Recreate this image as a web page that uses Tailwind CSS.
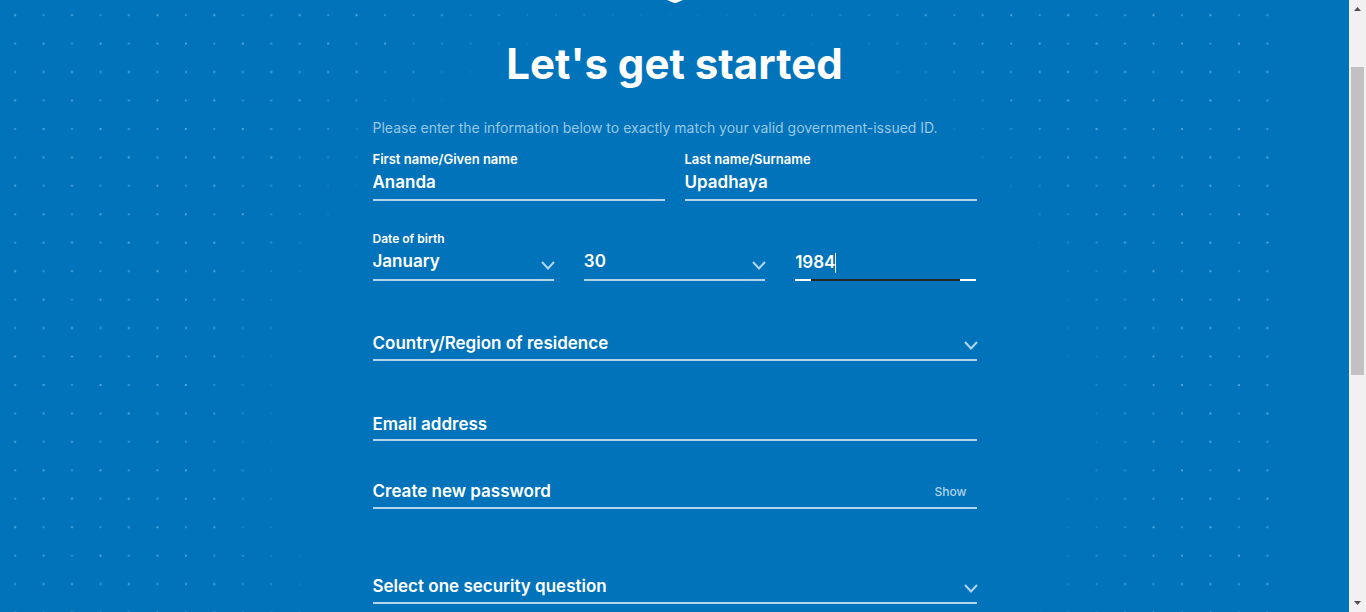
<!DOCTYPE html>
<html lang="en">
<head>
<meta charset="utf-8">
<meta name="viewport" content="width=device-width, initial-scale=1">
<title>Let's get started</title>
<script src="https://cdn.jsdelivr.net/npm/@tailwindcss/browser@4"></script>
</head>
<body class="flex min-h-screen bg-[#0073bb] font-['Inter','Liberation_Sans',sans-serif] text-white">
<main class="relative isolate min-w-0 flex-1 overflow-hidden">
  <!-- Dotted backdrop, faded out behind the form -->
  <svg class="absolute inset-0 -z-10 h-full w-full" aria-hidden="true">
    <defs>
      <pattern id="dots" x="0.9" y="0.9" width="142.3" height="85.35" patternUnits="userSpaceOnUse">
        <g fill="#8fd0f5">
          <circle cx="14.2" cy="14.2" r="1.1" opacity=".6"/><circle cx="42.7" cy="14.2" r="1.1" opacity=".45"/><circle cx="71.1" cy="14.2" r="1.1" opacity=".65"/><circle cx="99.6" cy="14.2" r="1.1" opacity=".4"/><circle cx="128" cy="14.2" r="1.1" opacity=".5"/>
          <circle cx="14.2" cy="42.7" r="1.1" opacity=".5"/><circle cx="42.7" cy="42.7" r="1.1" opacity=".6"/><circle cx="71.1" cy="42.7" r="1.1" opacity=".45"/><circle cx="99.6" cy="42.7" r="1.1" opacity=".65"/><circle cx="128" cy="42.7" r="1.1" opacity=".5"/>
          <circle cx="14.2" cy="71.1" r="1.1" opacity=".45"/><circle cx="42.7" cy="71.1" r="1.1" opacity=".5"/><circle cx="71.1" cy="71.1" r="1.1" opacity=".6"/><circle cx="99.6" cy="71.1" r="1.1" opacity=".45"/><circle cx="128" cy="71.1" r="1.1" opacity=".65"/>
        </g>
      </pattern>
      <radialGradient id="fade" gradientUnits="userSpaceOnUse" cx="675" cy="420" r="500">
        <stop offset=".77" stop-color="#000"/><stop offset=".98" stop-color="#fff"/>
      </radialGradient>
      <mask id="hole" maskUnits="userSpaceOnUse" x="0" y="0" width="1280" height="100%"><rect width="1280" height="100%" fill="url(#fade)"/></mask>
    </defs>
    <rect width="1280" height="100%" fill="url(#dots)" mask="url(#hole)"/>
  </svg>

  <svg class="mx-auto block h-[3px] w-4" viewBox="0 0 16 3" aria-hidden="true"><path d="M0 0H16L9.5 2.7Q8 3.3 6.5 2.7Z" fill="#fff"/></svg>

  <form class="mx-auto w-full max-w-[604px] pb-2">
    <h1 class="mt-9 text-center text-[42px] leading-[50px] font-bold">Let's get started</h1>
    <p class="mt-[29px] text-[14px] leading-5 text-[#99c7e4]">Please enter the information below to exactly match your valid government-issued ID.</p>

    <div class="mt-[11px] grid grid-cols-2 gap-5">
      <div>
        <label for="first" class="block text-[13px] leading-5 font-semibold">First name/Given name</label>
        <input id="first" type="text" value="Ananda" class="block h-8 w-full border-b-2 border-[#b2d5eb] bg-transparent pb-1 text-[17px] font-semibold outline-none">
      </div>
      <div>
        <label for="last" class="block text-[13px] leading-5 font-semibold">Last name/Surname</label>
        <input id="last" type="text" value="Upadhaya" class="block h-8 w-full border-b-2 border-[#b2d5eb] bg-transparent pb-1 text-[17px] font-semibold outline-none">
      </div>
    </div>

    <fieldset class="mt-7">
      <legend class="block text-[12px] leading-5 font-semibold">Date of birth</legend>
      <div class="grid grid-cols-3 gap-[30px]">
        <div class="relative">
          <select aria-label="Month" class="block h-8 w-full appearance-none border-b-2 border-[#b2d5eb] bg-transparent pb-1 text-[17px] font-semibold outline-none"><option>January</option></select>
          <svg class="pointer-events-none absolute -right-0.5 bottom-2.5 h-3 w-4" viewBox="0 0 16 12" fill="none" stroke="#b2d5eb" stroke-width="2" aria-hidden="true"><path d="M2 3l6 6.5L14 3"/></svg>
        </div>
        <div class="relative">
          <select aria-label="Day" class="block h-8 w-full appearance-none border-b-2 border-[#b2d5eb] bg-transparent pb-1 text-[17px] font-semibold outline-none"><option>30</option></select>
          <svg class="pointer-events-none absolute -right-0.5 bottom-2.5 h-3 w-4" viewBox="0 0 16 12" fill="none" stroke="#b2d5eb" stroke-width="2" aria-hidden="true"><path d="M2 3l6 6.5L14 3"/></svg>
        </div>
        <div class="relative">
          <input aria-label="Year" type="text" value="1984" class="block h-8 w-full border-b-2 border-white bg-transparent pb-1 text-[17px] font-semibold outline-none">
          <span class="absolute top-1 left-10 h-5 w-px bg-white"></span>
          <span class="absolute inset-x-4 bottom-0 h-0.5 bg-[#262626]"></span>
        </div>
      </div>
    </fieldset>

    <div class="relative mt-12">
      <select aria-label="Country/Region of residence" class="block h-8 w-full appearance-none border-b-2 border-[#b2d5eb] bg-transparent text-[17px] font-semibold outline-none"><option>Country/Region of residence</option></select>
      <svg class="pointer-events-none absolute -right-0.5 bottom-2.5 h-3 w-4" viewBox="0 0 16 12" fill="none" stroke="#b2d5eb" stroke-width="2" aria-hidden="true"><path d="M2 3l6 6.5L14 3"/></svg>
    </div>

    <input aria-label="Email address" type="email" placeholder="Email address" class="mt-12 block h-8 w-full border-b-2 border-[#b2d5eb] bg-transparent text-[17px] font-semibold outline-none placeholder:text-white">

    <div class="mt-9 flex h-8 items-center border-b-2 border-[#b2d5eb] pr-2.5">
      <input aria-label="Create new password" type="password" placeholder="Create new password" class="min-w-0 flex-1 bg-transparent text-[17px] font-semibold outline-none placeholder:text-white">
      <button type="button" class="text-[12px] font-medium text-[#b2d5eb]">Show</button>
    </div>

    <div class="relative mt-[63px]">
      <select aria-label="Select one security question" class="block h-8 w-full appearance-none border-b-2 border-[#b2d5eb] bg-transparent text-[17px] font-semibold outline-none"><option>Select one security question</option></select>
      <svg class="pointer-events-none absolute -right-0.5 bottom-2.5 h-3 w-4" viewBox="0 0 16 12" fill="none" stroke="#b2d5eb" stroke-width="2" aria-hidden="true"><path d="M2 3l6 6.5L14 3"/></svg>
    </div>
  </form>
</main>

<!-- Scroll bar -->
<div class="flex w-[17px] flex-col items-center bg-[#f1f1f1]" aria-hidden="true">
  <svg class="h-[17px] w-[17px] shrink-0" viewBox="0 0 17 17"><path d="M5 11L8.5 7L12 11Z" fill="#505050"/></svg>
  <div class="mt-[50px] h-[308px] w-[13px] bg-[#c1c1c1]"></div>
  <svg class="mt-auto h-[17px] w-[17px] shrink-0" viewBox="0 0 17 17"><path d="M5 6L8.5 10L12 6Z" fill="#505050"/></svg>
</div>
</body>
</html>
